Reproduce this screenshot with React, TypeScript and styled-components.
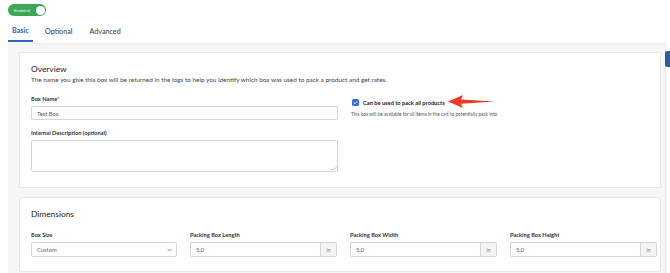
import * as React from 'react'
import styled, { createGlobalStyle } from 'styled-components'

const GlobalStyle = createGlobalStyle`
  html, body {
    margin: 0;
    padding: 0;
    background: #fff;
    overflow: hidden;
    font-family: Lato, "Liberation Sans", sans-serif;
    color: #333;
  }
`

const Page = styled.div`
  position: relative;
  width: 670px;
  height: 273px;
  padding: 4px 0 0 8px;
  box-sizing: border-box;
`

const Toggle = styled.div`
  width: 38px;
  height: 12px;
  border-radius: 6px;
  background: #3ba757;
  display: flex;
  align-items: center;
  justify-content: space-between;
  padding: 0 1.5px 0 6px;
  box-sizing: border-box;
`

const ToggleText = styled.span`
  font-size: 4.5px;
  color: #eaf6ec;
`

const Knob = styled.span`
  width: 9px;
  height: 9px;
  border-radius: 50%;
  background: #fff;
`

const TabBar = styled.div`
  display: flex;
  gap: 8px;
  margin-top: 4px;
  width: 658px;
  border-bottom: 1px solid #ececec;
`

const Tab = styled.div<{ $active?: boolean }>`
  height: 22px;
  padding: 0 5px 0 4px;
  display: flex;
  align-items: center;
  font-size: 7.2px;
  font-weight: ${p => (p.$active ? 700 : 400)};
  color: ${p => (p.$active ? '#2766c0' : '#3a3a3a')};
  border-bottom: 2px solid ${p => (p.$active ? '#2766c0' : 'transparent')};
  margin-bottom: -1px;
  &:first-child {
    width: 25px;
    box-sizing: border-box;
  }
`

const Panel = styled.div`
  width: 658px;
  height: 240px;
  background: #f5f6f7;
  border-right: 1px solid #e6e6e6;
  padding: 8px 4px 0 11px;
  box-sizing: border-box;
  display: flex;
  flex-direction: column;
  gap: 9px;
`

const Card = styled.section<{ $bottom?: boolean }>`
  background: #fff;
  border: 1px solid #e6e7e9;
  border-radius: 2px;
  padding: ${p => (p.$bottom ? '10px 11px 0' : '10px 11px 15px')};
  height: ${p => (p.$bottom ? '75px' : 'auto')};
  box-sizing: border-box;
`

const Title = styled.h2`
  margin: 0;
  font-size: 8.4px;
  font-weight: 400;
  line-height: 12px;
  color: #222;
`

const Description = styled.p`
  margin: 1px 0 0;
  font-size: 6.4px;
  line-height: 8px;
  color: #444;
`

const TwoCols = styled.div`
  display: grid;
  grid-template-columns: 307px 307px;
  gap: 13px;
  margin-top: 11px;
`

const FourCols = styled.div`
  display: grid;
  grid-template-columns: 146px 147px 147px 147px;
  gap: 13px;
  margin-top: 11px;
`

const Stack = styled.div`
  display: flex;
  flex-direction: column;
  gap: 9px;
`

const Field = styled.div`
  display: flex;
  flex-direction: column;
`

const Label = styled.label`
  font-size: 5.7px;
  font-weight: 700;
  line-height: 7px;
  color: #333;
  margin-bottom: 4px;
`

const Req = styled.span`
  color: #d33;
`

const Input = styled.div`
  height: 14px;
  border: 1px solid #d3d5d8;
  border-radius: 2px;
  box-sizing: border-box;
  display: flex;
  align-items: center;
  padding-left: 5px;
  font-size: 5.8px;
  color: #555;
`

const TextArea = styled.div`
  position: relative;
  height: 32px;
  border: 1px solid #d3d5d8;
  border-radius: 2px;
  box-sizing: border-box;
  &::after {
    content: '';
    position: absolute;
    right: 1px;
    bottom: 1px;
    width: 3px;
    height: 3px;
    border-right: 1px solid #aaa;
    border-bottom: 1px solid #aaa;
    transform: skew(-45deg);
    opacity: 0.6;
  }
`

const Select = styled(Input)`
  height: 15px;
  justify-content: space-between;
  padding-right: 4px;
  color: #666;
`

const Chevron = styled.svg`
  width: 5px;
  height: 4px;
`

const Group = styled.div`
  display: flex;
  height: 15px;
  border: 1px solid #d3d5d8;
  border-radius: 2px;
  box-sizing: border-box;
`

const GroupValue = styled.div`
  flex: 1;
  display: flex;
  align-items: center;
  padding-left: 5px;
  font-size: 5.8px;
  color: #555;
`

const Addon = styled.div`
  width: 15px;
  background: #f3f4f5;
  border-left: 1px solid #d3d5d8;
  display: flex;
  align-items: center;
  justify-content: center;
  font-size: 5px;
  color: #777;
`

const CheckCol = styled.div`
  position: relative;
  padding-top: 4px;
`

const CheckRow = styled.div`
  display: flex;
  align-items: center;
  gap: 4px;
  margin-left: 1px;
`

const Box = styled.span`
  width: 7px;
  height: 7px;
  border-radius: 1.5px;
  background: #3a6fd8;
  display: flex;
  align-items: center;
  justify-content: center;
`

const CheckLabel = styled.span`
  font-size: 5.7px;
  font-weight: 700;
  color: #222;
`

const Help = styled.p`
  margin: 5px 0 0;
  font-size: 4.7px;
  color: #555;
`

const Arrow = styled.svg`
  position: absolute;
  left: 97px;
  top: 0px;
  width: 47px;
  height: 13px;
`

const SideTab = styled.div`
  position: absolute;
  right: 0;
  top: 51px;
  width: 5px;
  height: 16px;
  background: #2d5c9f;
  border-radius: 2px 0 0 2px;
`

const UnitInput = ({ value }: { value: string }) => (
  <Group>
    <GroupValue>{value}</GroupValue>
    <Addon>in</Addon>
  </Group>
)

export default function App() {
  return (
    <>
      <GlobalStyle />
      <Page>
        <Toggle>
          <ToggleText>Enabled</ToggleText>
          <Knob />
        </Toggle>
        <TabBar>
          <Tab $active>Basic</Tab>
          <Tab>Optional</Tab>
          <Tab>Advanced</Tab>
        </TabBar>
        <Panel>
          <Card>
            <Title>Overview</Title>
            <Description>
              The name you give this box will be returned in the logs to help you identify which box was used to pack a
              product and get rates.
            </Description>
            <TwoCols>
              <Stack>
                <Field>
                  <Label>
                    Box Name<Req>*</Req>
                  </Label>
                  <Input>Test Box</Input>
                </Field>
                <Field>
                  <Label>Internal Description (optional)</Label>
                  <TextArea />
                </Field>
              </Stack>
              <CheckCol>
                <CheckRow>
                  <Box>
                    <svg width="5" height="5" viewBox="0 0 10 10">
                      <path d="M1.5 5.2 L4 7.5 L8.5 2.5" fill="none" stroke="#fff" strokeWidth="1.8" />
                    </svg>
                  </Box>
                  <CheckLabel>Can be used to pack all products</CheckLabel>
                </CheckRow>
                <Help>This box will be available for all items in the cart to potentially pack into</Help>
                <Arrow viewBox="0 0 47 13">
                  <path d="M0 6.5 L15 0 L13 4.6 L46.5 6.6 L13 8.8 L15 13 Z" fill="#ee3a24" />
                </Arrow>
              </CheckCol>
            </TwoCols>
          </Card>
          <Card $bottom>
            <Title>Dimensions</Title>
            <FourCols>
              <Field>
                <Label>Box Size</Label>
                <Select>
                  <span>Custom</span>
                  <Chevron viewBox="0 0 10 6">
                    <path d="M1 1 L5 5 L9 1" fill="none" stroke="#555" strokeWidth="1.4" />
                  </Chevron>
                </Select>
              </Field>
              <Field>
                <Label>Packing Box Length</Label>
                <UnitInput value="5.0" />
              </Field>
              <Field>
                <Label>Packing Box Width</Label>
                <UnitInput value="5.0" />
              </Field>
              <Field>
                <Label>Packing Box Height</Label>
                <UnitInput value="5.0" />
              </Field>
            </FourCols>
          </Card>
        </Panel>
        <SideTab />
      </Page>
    </>
  )
}
